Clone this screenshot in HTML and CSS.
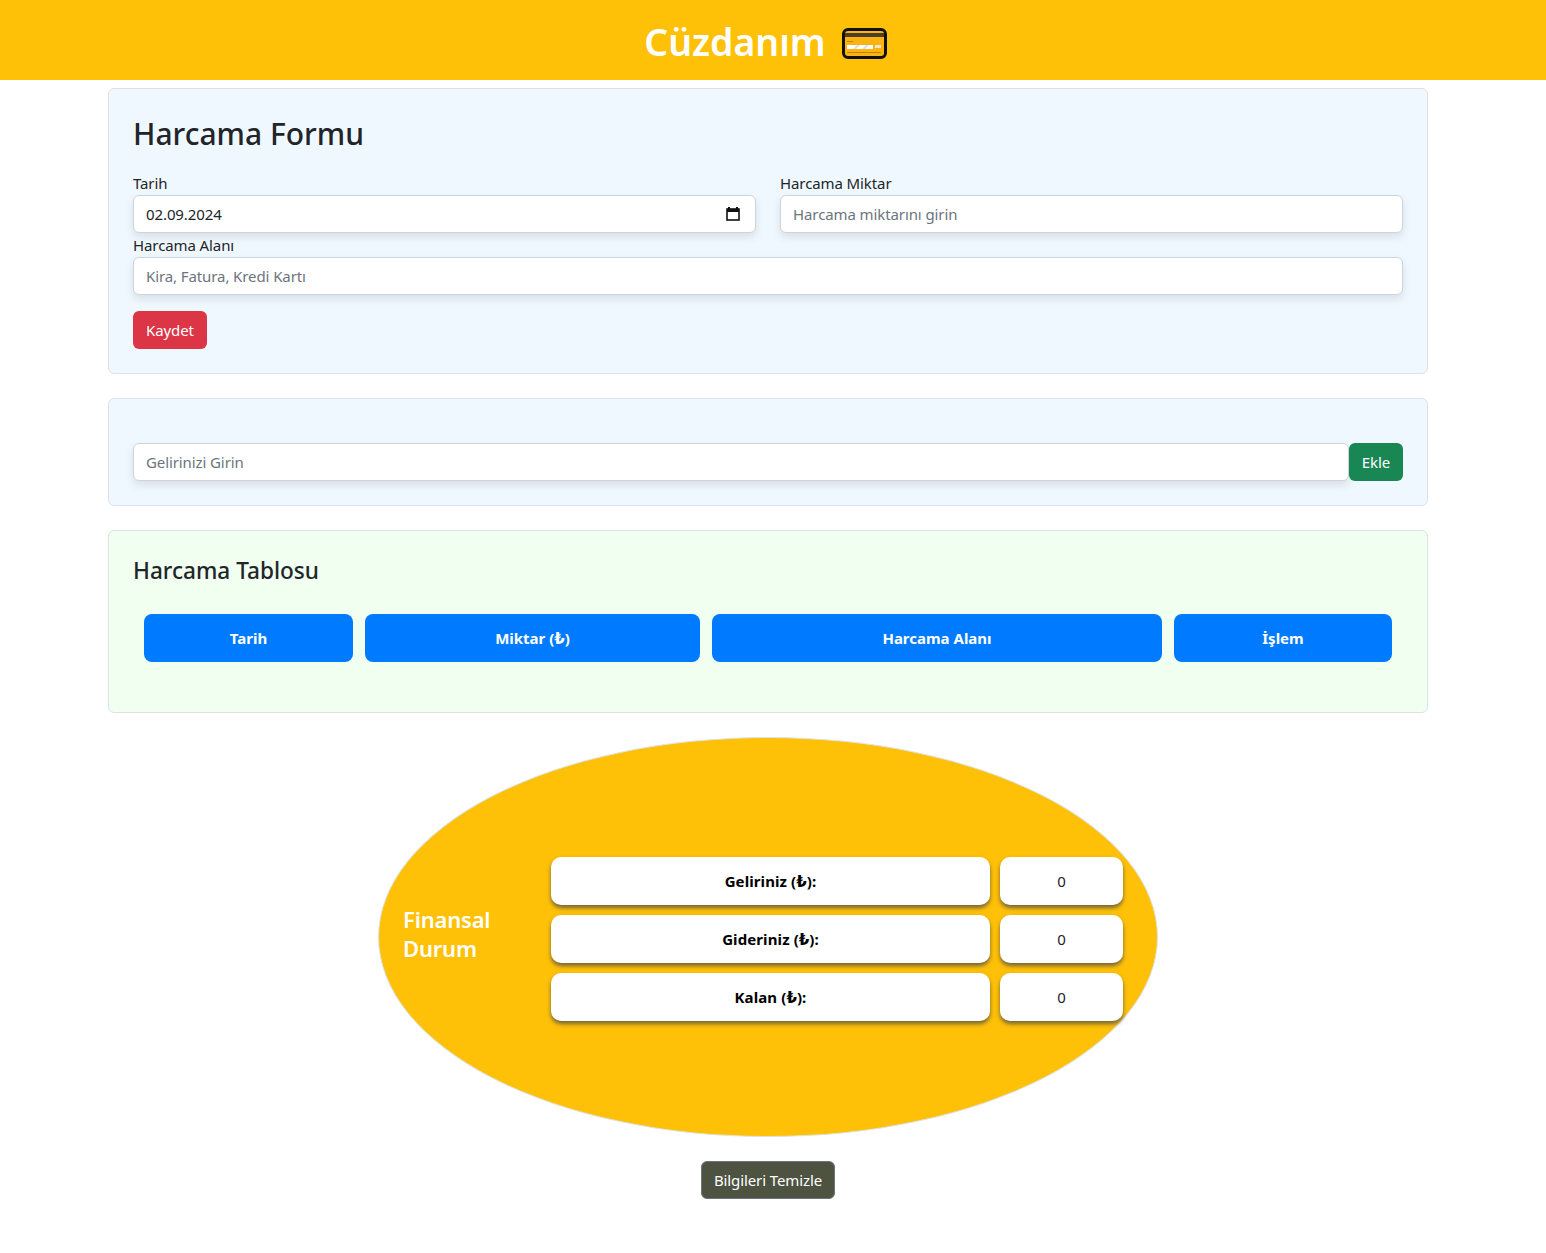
FILE: index.html
```html
<!DOCTYPE html>
<html lang="tr">

<head>
    <meta charset="UTF-8">
    <meta name="viewport" content="width=device-width, initial-scale=1.0">
    <title>Cüzdanım</title>
    <link rel="stylesheet" href="styles.css">
</head>

<body>

    <header class="top-bar">
        <h1>Cüzdanım</h1>
        <svg class="card-icon" width="45" height="31" viewBox="0 0 45 31">
            <rect x="1.5" y="1.5" width="42" height="28" rx="4.5" fill="#fbb40f" stroke="#111" stroke-width="3"/>
            <rect x="3" y="5" width="39" height="4" fill="#4b3f2a"/>
            <rect x="5" y="13" width="6" height="1" fill="#c97f00"/>
            <rect x="5" y="17" width="26" height="4" fill="#fff"/>
            <path d="M11 21l4-4h3l-4 4zM20 21l4-4h3l-4 4z" fill="#cfe3ee"/>
            <rect x="33" y="17" width="6" height="3" fill="#f4e6c4"/>
            <rect x="5" y="24" width="34" height="1" fill="#c97f00"/>
        </svg>
    </header>

    <main class="page">
        <section class="panel panel-blue">
            <h2 class="form-title">Harcama Formu</h2>
            <div class="form-row">
                <div class="field">
                    <label>Tarih</label>
                    <div class="date-wrap">
                        <input class="control" type="text" value="02.09.2024">
                        <svg class="date-icon" width="14" height="14" viewBox="0 0 14 14">
                            <path d="M3 0v2M11 0v2" stroke="#111" stroke-width="2"/>
                            <rect x="1" y="2" width="12" height="11" fill="none" stroke="#111" stroke-width="1.6"/>
                            <rect x="1" y="2" width="12" height="3" fill="#111"/>
                        </svg>
                    </div>
                </div>
                <div class="field">
                    <label>Harcama Miktar</label>
                    <input class="control" type="text" placeholder="Harcama miktarını girin">
                </div>
            </div>
            <div class="field">
                <label>Harcama Alanı</label>
                <input class="control" type="text" placeholder="Kira, Fatura, Kredi Kartı">
            </div>
            <button class="btn btn-red">Kaydet</button>
        </section>

        <section class="panel panel-blue income">
            <input class="control" type="text" placeholder="Gelirinizi Girin">
            <button class="btn btn-green">Ekle</button>
        </section>

        <section class="panel panel-green">
            <h3 class="table-title">Harcama Tablosu</h3>
            <table class="spend-table">
                <tr>
                    <th class="col-date">Tarih</th>
                    <th class="col-amount">Miktar (<span class="lira">₺</span>)</th>
                    <th class="col-area">Harcama Alanı</th>
                    <th>İşlem</th>
                </tr>
            </table>
        </section>

        <section class="summary">
            <h3 class="summary-title">Finansal Durum</h3>
            <div class="summary-grid">
                <div class="cell cell-label"><span>Geliriniz (<span class="lira">₺</span>):</span></div>
                <div class="cell">0</div>
                <div class="cell cell-label"><span>Gideriniz (<span class="lira">₺</span>):</span></div>
                <div class="cell">0</div>
                <div class="cell cell-label"><span>Kalan (<span class="lira">₺</span>):</span></div>
                <div class="cell">0</div>
            </div>
        </section>

        <div class="clear-row">
            <button class="btn btn-dark">Bilgileri Temizle</button>
        </div>
    </main>

</body>

</html>
```

FILE: styles.css
```css
* {
    box-sizing: border-box;
}

body {
    margin: 0;
    height: 1253px;
    overflow: hidden;
    font-family: "Noto Sans", sans-serif;
    font-size: 15px;
    line-height: 20px;
    letter-spacing: -0.1px;
    color: #212529;
    background: #fff;
}

.top-bar {
    height: 80px;
    background: #ffc107;
    display: flex;
    align-items: center;
    justify-content: center;
    gap: 16px;
    padding-right: 15px;
}

.top-bar h1 {
    margin: 4px 0 0;
    font-size: 37.4px;
    font-weight: 600;
    line-height: 46px;
    letter-spacing: 0;
    color: #fff;
}

.card-icon {
    margin-top: 6px;
}

.page {
    width: 1320px;
    margin-left: 108px;
    padding-top: 8px;
}

.panel {
    border: 1px solid #dee2e6;
    border-radius: 6px;
    padding: 24px;
    margin-bottom: 24px;
}

.panel-blue {
    background: #f0f8ff;
}

.panel-green {
    background: #f0fff0;
    height: 183px;
}

.form-title {
    margin: 0 0 16px;
    font-size: 30px;
    font-weight: 500;
    line-height: 42px;
    letter-spacing: 0;
}

.form-row {
    display: grid;
    grid-template-columns: 1fr 1fr;
    gap: 24px;
}

.field {
    display: flex;
    flex-direction: column;
}

.field label {
    height: 24px;
    line-height: 24px;
}

.control {
    display: block;
    width: 100%;
    height: 38px;
    padding: 6px 12px;
    font: inherit;
    letter-spacing: inherit;
    color: #212529;
    background: #fff;
    border: 1px solid #ced4da;
    border-radius: 6px;
    box-shadow: 0 4px 8px rgba(0, 0, 0, 0.1);
}

.control::placeholder {
    color: #6c757d;
}

.date-wrap {
    position: relative;
}

.date-icon {
    position: absolute;
    top: 12px;
    right: 16px;
}

.btn {
    height: 38px;
    padding: 0 12px;
    font: inherit;
    letter-spacing: inherit;
    color: #fff;
    border: 1px solid transparent;
    border-radius: 6px;
}

.btn-red {
    display: block;
    margin-top: 16px;
    background: #dc3545;
}

.btn-green {
    flex: none;
    width: 54px;
    padding: 0;
    background: #198754;
}

.btn-dark {
    background: #4d5340;
    border-color: #6c757d;
}

.income {
    display: flex;
    padding-top: 44px;
}

.income .control {
    flex: 1;
}

.table-title {
    margin: 0 0 15px;
    font-size: 22.6px;
    font-weight: 500;
    line-height: 32px;
    letter-spacing: 0;
}

.spend-table {
    width: 1272px;
    margin: 0 -1px;
    table-layout: fixed;
    border-collapse: separate;
    border-spacing: 12px;
}

.spend-table th {
    height: 48px;
    padding: 0;
    font-weight: 700;
    letter-spacing: 0;
    color: #fff;
    background: #007bff;
    border-radius: 8px;
}

.col-date {
    width: 209px;
}

.col-amount {
    width: 335px;
}

.col-area {
    width: 450px;
}

.lira {
    font-family: "DejaVu Sans", sans-serif;
    font-size: 15px;
}

.summary {
    width: 780px;
    height: 400px;
    margin: 0 0 24px 270px;
    padding-left: 24px;
    display: flex;
    align-items: center;
    background: #ffc107;
    border: 1px solid #dee2e6;
    border-radius: 50%;
}

.summary-title {
    flex: none;
    width: 148px;
    margin: 0 0 6px;
    font-size: 22px;
    font-weight: 600;
    line-height: 29px;
    letter-spacing: -0.2px;
    color: #fff;
}

.summary-grid {
    display: grid;
    grid-template-columns: 439px 123px;
    grid-auto-rows: 48px;
    gap: 10px;
    margin-top: 4px;
}

.cell {
    display: flex;
    align-items: center;
    justify-content: center;
    color: #212529;
    background: #fff;
    border-radius: 10px;
    box-shadow: 0 3px 4px rgba(70, 70, 70, 0.75);
}

.cell-label {
    font-weight: 700;
    letter-spacing: 0.1px;
    color: #000;
}

.clear-row {
    display: flex;
    justify-content: center;
}
```
